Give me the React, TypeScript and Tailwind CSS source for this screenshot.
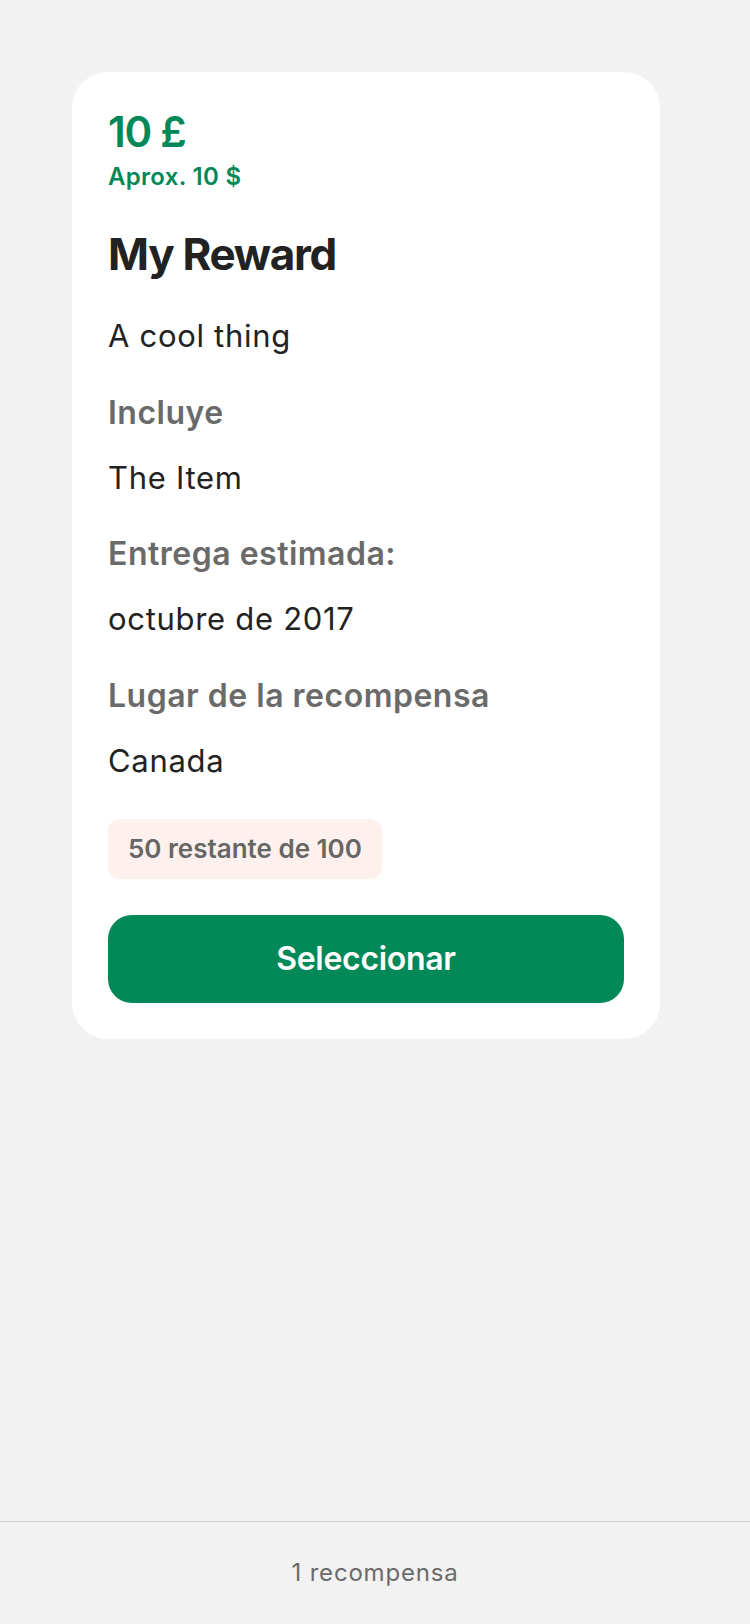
export default function App() {
  return (
    <div className="min-h-screen bg-[#f2f2f2] flex flex-col font-['Inter',sans-serif]">
      <main className="flex-1 pt-[72px] pl-[72px]">
        {/* Reward card */}
        <div className="w-[588px] bg-white rounded-[36px] p-[36px] flex flex-col">
          <p className="text-[42px] leading-[48px] font-semibold text-[#038858] tracking-[-1.3px]">10 £</p>
          <p className="mt-[5px] text-[24px] leading-[32px] font-semibold text-[#038858] tracking-[0.3px]">Aprox. 10 $</p>

          <h1 className="mt-[35px] text-[44px] leading-[52px] font-bold text-[#222222] tracking-[-1.3px]">My Reward</h1>
          <p className="mt-[36px] text-[31px] leading-[40px] text-[#222222] tracking-[0.7px]">A cool thing</p>

          <p className="mt-[37px] text-[32px] leading-[40px] font-semibold text-[#6a6a6a] tracking-[0.5px]">Incluye</p>
          <p className="mt-[25px] text-[31px] leading-[40px] text-[#222222] tracking-[0.7px]">The Item</p>

          <p className="mt-[36px] text-[32px] leading-[40px] font-semibold text-[#6a6a6a] tracking-[0.5px]">Entrega estimada:</p>
          <p className="mt-[25px] text-[31px] leading-[40px] text-[#222222] tracking-[0.7px]">octubre de 2017</p>

          <p className="mt-[37px] text-[32px] leading-[40px] font-semibold text-[#6a6a6a] tracking-[0.5px]">Lugar de la recompensa</p>
          <p className="mt-[25px] text-[31px] leading-[40px] text-[#222222] tracking-[0.7px]">Canada</p>

          <div className="mt-[38px] self-start h-[60px] px-[20px] rounded-[12px] bg-[#fef0ec] flex items-center">
            <span className="text-[26px] leading-[60px] font-semibold text-[#666666]">50 restante de 100</span>
          </div>

          <button className="mt-[36px] w-full h-[88px] rounded-[24px] bg-[#038858] text-white text-[32px] font-semibold tracking-[-0.3px] flex items-center justify-center">
            Seleccionar
          </button>
        </div>
      </main>

      <footer className="h-[103px] border-t border-[#cfcfcf] flex items-center justify-center">
        <span className="text-[24px] leading-[32px] text-[#6b6b6b] tracking-[0.8px]">1 recompensa</span>
      </footer>
    </div>
  );
}
